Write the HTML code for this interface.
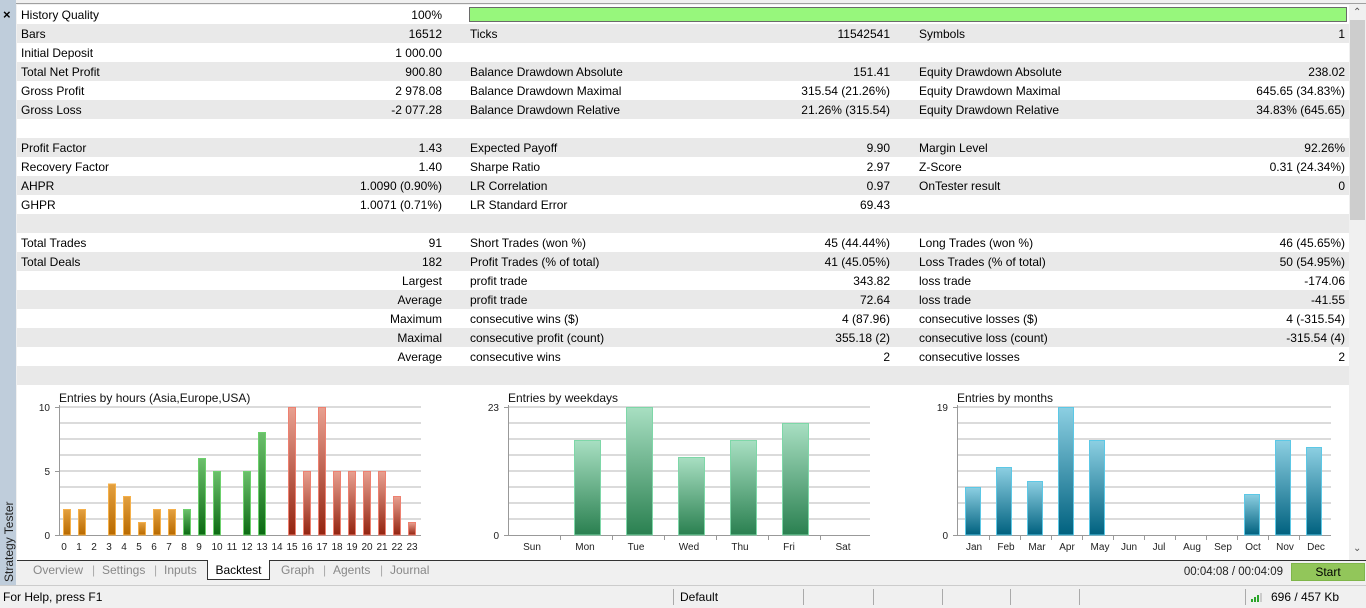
<!DOCTYPE html>
<html><head><meta charset="utf-8"><style>
*{margin:0;padding:0;box-sizing:border-box}
body{width:1366px;height:608px;overflow:hidden;background:#f0f0f0;font-family:"Liberation Sans",sans-serif;font-size:12px;color:#000;position:relative}
.side{position:absolute;left:0;top:0;width:16px;height:586px;background:#bfcddb}
.main{position:absolute;left:17px;top:5px;width:1332px;height:555px;background:#fff}
.row{position:absolute;left:0;width:1332px;height:19px;line-height:21px}
.g{background:#e9e9e9}
.row span{position:absolute;white-space:nowrap}
.sb{position:absolute;left:1349px;top:5px;width:17px;height:555px;background:#f0f0f0}
.thumb{position:absolute;left:1px;top:15px;width:15px;height:200px;background:#cdcdcd}
</style></head><body>
<div style="position:absolute;left:0;top:3px;width:1366px;height:1px;background:#a0a0a0"></div>
<div class="side"></div>
<div style="position:absolute;left:3px;top:7px;font-size:13px;font-weight:bold">×</div>
<div style="position:absolute;left:-36px;top:530px;transform:rotate(-90deg);width:90px;font-size:12px;color:#222">Strategy Tester</div>
<div class="main">
<div class="row" style="top:0"><span style="left:4px">History Quality</span><span style="right:907px">100%</span><div style="position:absolute;left:452px;top:2px;width:878px;height:15px;background:#97f77c;border:1px solid #6a6a6a"></div></div>
<div class="row g" style="top:19px"><span style="left:4px">Bars</span><span style="right:907px">16512</span><span style="left:453px">Ticks</span><span style="right:459px">11542541</span><span style="left:902px">Symbols</span><span style="right:4px">1</span></div>
<div class="row" style="top:38px"><span style="left:4px">Initial Deposit</span><span style="right:907px">1 000.00</span></div>
<div class="row g" style="top:57px"><span style="left:4px">Total Net Profit</span><span style="right:907px">900.80</span><span style="left:453px">Balance Drawdown Absolute</span><span style="right:459px">151.41</span><span style="left:902px">Equity Drawdown Absolute</span><span style="right:4px">238.02</span></div>
<div class="row" style="top:76px"><span style="left:4px">Gross Profit</span><span style="right:907px">2 978.08</span><span style="left:453px">Balance Drawdown Maximal</span><span style="right:459px">315.54 (21.26%)</span><span style="left:902px">Equity Drawdown Maximal</span><span style="right:4px">645.65 (34.83%)</span></div>
<div class="row g" style="top:95px"><span style="left:4px">Gross Loss</span><span style="right:907px">-2 077.28</span><span style="left:453px">Balance Drawdown Relative</span><span style="right:459px">21.26% (315.54)</span><span style="left:902px">Equity Drawdown Relative</span><span style="right:4px">34.83% (645.65)</span></div>
<div class="row g" style="top:133px"><span style="left:4px">Profit Factor</span><span style="right:907px">1.43</span><span style="left:453px">Expected Payoff</span><span style="right:459px">9.90</span><span style="left:902px">Margin Level</span><span style="right:4px">92.26%</span></div>
<div class="row" style="top:152px"><span style="left:4px">Recovery Factor</span><span style="right:907px">1.40</span><span style="left:453px">Sharpe Ratio</span><span style="right:459px">2.97</span><span style="left:902px">Z-Score</span><span style="right:4px">0.31 (24.34%)</span></div>
<div class="row g" style="top:171px"><span style="left:4px">AHPR</span><span style="right:907px">1.0090 (0.90%)</span><span style="left:453px">LR Correlation</span><span style="right:459px">0.97</span><span style="left:902px">OnTester result</span><span style="right:4px">0</span></div>
<div class="row" style="top:190px"><span style="left:4px">GHPR</span><span style="right:907px">1.0071 (0.71%)</span><span style="left:453px">LR Standard Error</span><span style="right:459px">69.43</span></div>
<div class="row g" style="top:209px"></div>
<div class="row" style="top:228px"><span style="left:4px">Total Trades</span><span style="right:907px">91</span><span style="left:453px">Short Trades (won %)</span><span style="right:459px">45 (44.44%)</span><span style="left:902px">Long Trades (won %)</span><span style="right:4px">46 (45.65%)</span></div>
<div class="row g" style="top:247px"><span style="left:4px">Total Deals</span><span style="right:907px">182</span><span style="left:453px">Profit Trades (% of total)</span><span style="right:459px">41 (45.05%)</span><span style="left:902px">Loss Trades (% of total)</span><span style="right:4px">50 (54.95%)</span></div>
<div class="row" style="top:266px"><span style="right:907px">Largest</span><span style="left:453px">profit trade</span><span style="right:459px">343.82</span><span style="left:902px">loss trade</span><span style="right:4px">-174.06</span></div>
<div class="row g" style="top:285px"><span style="right:907px">Average</span><span style="left:453px">profit trade</span><span style="right:459px">72.64</span><span style="left:902px">loss trade</span><span style="right:4px">-41.55</span></div>
<div class="row" style="top:304px"><span style="right:907px">Maximum</span><span style="left:453px">consecutive wins ($)</span><span style="right:459px">4 (87.96)</span><span style="left:902px">consecutive losses ($)</span><span style="right:4px">4 (-315.54)</span></div>
<div class="row g" style="top:323px"><span style="right:907px">Maximal</span><span style="left:453px">consecutive profit (count)</span><span style="right:459px">355.18 (2)</span><span style="left:902px">consecutive loss (count)</span><span style="right:4px">-315.54 (4)</span></div>
<div class="row" style="top:342px"><span style="right:907px">Average</span><span style="left:453px">consecutive wins</span><span style="right:459px">2</span><span style="left:902px">consecutive losses</span><span style="right:4px">2</span></div>
<div class="row g" style="top:361px"></div>
</div>
<div class="sb"><div style="position:absolute;left:4px;top:2px;font-size:10px;color:#555">&#8963;</div><div class="thumb"></div><div style="position:absolute;left:4px;top:538px;font-size:10px;color:#555">&#8964;</div></div>

<svg style="position:absolute;left:0;top:0" width="1366" height="560" font-family="Liberation Sans,sans-serif">
<defs>
<linearGradient id="o" x1="0" y1="0" x2="0" y2="1"><stop offset="0" stop-color="#e3a040"/><stop offset="1" stop-color="#b86a00"/></linearGradient>
<linearGradient id="gr" x1="0" y1="0" x2="0" y2="1"><stop offset="0" stop-color="#6cbf6c"/><stop offset="1" stop-color="#0b6a12"/></linearGradient>
<linearGradient id="rd" x1="0" y1="0" x2="0" y2="1"><stop offset="0" stop-color="#e8a090"/><stop offset="1" stop-color="#932410"/></linearGradient>
<linearGradient id="tl" x1="0" y1="0" x2="0" y2="1"><stop offset="0" stop-color="#a8dfc2"/><stop offset="1" stop-color="#2a8050"/></linearGradient>
<linearGradient id="bl" x1="0" y1="0" x2="0" y2="1"><stop offset="0" stop-color="#8ccfe2"/><stop offset="1" stop-color="#00617f"/></linearGradient>
</defs>
<g stroke="#cfcfcf" stroke-width="1.5">
<path d="M60 407H421M60 423H421M60 439H421M60 455H421M60 471H421M60 487H421M60 503H421M60 519H421"/>
<path d="M509 407H870M509 423H870M509 439H870M509 455H870M509 471H870M509 487H870M509 503H870M509 519H870"/>
<path d="M958 407H1331M958 423H1331M958 439H1331M958 455H1331M958 471H1331M958 487H1331M958 503H1331M958 519H1331"/>
</g>
<g stroke="#999" stroke-width="1">
<path d="M59.5 405V536M55 407.5H60M55 471.5H60M55 535.5H421"/>
<path d="M508.5 405V536M504 407.5H509M504 535.5H870M560.5 535V540M612.5 535V540M664.5 535V540M716.5 535V540M768.5 535V540M820.5 535V540"/>
<path d="M957.5 405V536M953 407.5H958M953 535.5H1331M989.5 535V540M1020.5 535V540M1051.5 535V540M1082.5 535V540M1113.5 535V540M1144.5 535V540M1175.5 535V540M1206.5 535V540M1237.5 535V540M1268.5 535V540M1299.5 535V540"/>
</g>
<g font-size="12" fill="#111"><text x="59" y="402">Entries by hours (Asia,Europe,USA)</text><text x="508" y="402">Entries by weekdays</text><text x="957" y="402">Entries by months</text></g>
<g font-size="10" fill="#222" text-anchor="end"><text x="50" y="411">10</text><text x="50" y="475">5</text><text x="50" y="539">0</text><text x="499" y="411">23</text><text x="499" y="539">0</text><text x="948" y="411">19</text><text x="948" y="539">0</text></g>
<g fill="url(#o)" stroke="#f5b04a"><rect x="63.5" y="509.5" width="7" height="25.5"/><rect x="78.5" y="509.5" width="7" height="25.5"/><rect x="108.5" y="484" width="7" height="51"/><rect x="123.5" y="496.5" width="7" height="38.5"/><rect x="138.5" y="522.5" width="7" height="12.5"/><rect x="153.5" y="509.5" width="7" height="25.5"/><rect x="168.5" y="509.5" width="7" height="25.5"/></g>
<g fill="url(#gr)" stroke="#6cd06c"><rect x="183.5" y="509.5" width="7" height="25.5"/><rect x="198.5" y="458.5" width="7" height="76.5"/><rect x="213.5" y="471.5" width="7" height="63.5"/><rect x="243.5" y="471.5" width="7" height="63.5"/><rect x="258.5" y="432.5" width="7" height="102.5"/></g>
<g fill="url(#rd)" stroke="#ee8070"><rect x="288.5" y="407.5" width="7" height="127.5"/><rect x="303.5" y="471.5" width="7" height="63.5"/><rect x="318.5" y="407.5" width="7" height="127.5"/><rect x="333.5" y="471.5" width="7" height="63.5"/><rect x="348.5" y="471.5" width="7" height="63.5"/><rect x="363.5" y="471.5" width="7" height="63.5"/><rect x="378.5" y="471.5" width="7" height="63.5"/><rect x="393.5" y="496.5" width="7" height="38.5"/><rect x="408.5" y="522.5" width="7" height="12.5"/></g>
<g fill="url(#tl)" stroke="#7ed7a8"><rect x="574.5" y="440.5" width="26" height="94.5"/><rect x="626.5" y="407.5" width="26" height="127.5"/><rect x="678.5" y="457.5" width="26" height="77.5"/><rect x="730.5" y="440.5" width="26" height="94.5"/><rect x="782.5" y="423.5" width="26" height="111.5"/></g>
<g fill="url(#bl)" stroke="#5cc8e6"><rect x="965.5" y="487.5" width="15" height="47.5"/><rect x="996.5" y="467.5" width="15" height="67.5"/><rect x="1027.5" y="481.5" width="15" height="53.5"/><rect x="1058.5" y="407.5" width="15" height="127.5"/><rect x="1089.5" y="440.5" width="15" height="94.5"/><rect x="1244.5" y="494.5" width="15" height="40.5"/><rect x="1275.5" y="440.5" width="15" height="94.5"/><rect x="1306.5" y="447.5" width="15" height="87.5"/></g>
<g font-size="10" fill="#222" text-anchor="middle">
<text x="64" y="550">0</text><text x="79" y="550">1</text><text x="94" y="550">2</text><text x="109" y="550">3</text><text x="124" y="550">4</text><text x="139" y="550">5</text><text x="154" y="550">6</text><text x="169" y="550">7</text><text x="184" y="550">8</text><text x="199" y="550">9</text><text x="217" y="550">10</text><text x="232" y="550">11</text><text x="247" y="550">12</text><text x="262" y="550">13</text><text x="277" y="550">14</text><text x="292" y="550">15</text><text x="307" y="550">16</text><text x="322" y="550">17</text><text x="337" y="550">18</text><text x="352" y="550">19</text><text x="367" y="550">20</text><text x="382" y="550">21</text><text x="397" y="550">22</text><text x="412" y="550">23</text>
<text x="532" y="550">Sun</text><text x="585" y="550">Mon</text><text x="636" y="550">Tue</text><text x="689" y="550">Wed</text><text x="740" y="550">Thu</text><text x="789" y="550">Fri</text><text x="843" y="550">Sat</text>
<text x="974" y="550">Jan</text><text x="1006" y="550">Feb</text><text x="1037" y="550">Mar</text><text x="1067" y="550">Apr</text><text x="1100" y="550">May</text><text x="1129" y="550">Jun</text><text x="1159" y="550">Jul</text><text x="1192" y="550">Aug</text><text x="1223" y="550">Sep</text><text x="1253" y="550">Oct</text><text x="1285" y="550">Nov</text><text x="1316" y="550">Dec</text>
</g>
</svg>

<div style="position:absolute;left:17px;top:560px;width:1349px;height:1px;background:#333"></div>
<div style="position:absolute;left:17px;top:560px;width:600px;height:22px;font-size:12px;color:#888;line-height:20px">
<span style="position:absolute;left:16px">Overview</span><span style="position:absolute;left:75px;color:#aaa">|</span>
<span style="position:absolute;left:85px">Settings</span><span style="position:absolute;left:137px;color:#aaa">|</span>
<span style="position:absolute;left:147px">Inputs</span>
<div style="position:absolute;left:190px;top:0;width:63px;height:20px;background:#fff;border:1px solid #333;border-top:none;color:#000;text-align:center">Backtest</div>
<span style="position:absolute;left:264px">Graph</span><span style="position:absolute;left:306px;color:#aaa">|</span>
<span style="position:absolute;left:316px">Agents</span><span style="position:absolute;left:363px;color:#aaa">|</span>
<span style="position:absolute;left:373px">Journal</span>
</div>
<div style="position:absolute;left:1150px;width:133px;text-align:right;top:566px;font-size:11.5px;color:#222">00:04:08 / 00:04:09</div>
<div style="position:absolute;left:1291px;top:563px;width:74px;height:18px;background:#92c65a;border:1px solid #7fb64a;text-align:center;line-height:16px;font-size:12px">Start</div>
<div style="position:absolute;left:0;top:585px;width:1366px;height:1px;background:#ccc"></div>
<div style="position:absolute;left:0;top:586px;width:1366px;height:22px;background:#f0f0f0;font-size:12px;line-height:22px">
<span style="position:absolute;left:3px">For Help, press F1</span>
<span style="position:absolute;left:673px;top:3px;width:1px;height:16px;background:#aaa"></span>
<span style="position:absolute;left:680px">Default</span>
<span style="position:absolute;left:803px;top:3px;width:1px;height:16px;background:#aaa"></span>
<span style="position:absolute;left:873px;top:3px;width:1px;height:16px;background:#aaa"></span>
<span style="position:absolute;left:942px;top:3px;width:1px;height:16px;background:#aaa"></span>
<span style="position:absolute;left:1010px;top:3px;width:1px;height:16px;background:#aaa"></span>
<span style="position:absolute;left:1079px;top:3px;width:1px;height:16px;background:#aaa"></span>
<span style="position:absolute;left:1245px;top:3px;width:1px;height:16px;background:#aaa"></span>
<svg style="position:absolute;left:1251px;top:6px" width="14" height="10"><rect x="0" y="7" width="2" height="3" fill="#2aa52a"/><rect x="3" y="5" width="2" height="5" fill="#2aa52a"/><rect x="6" y="3" width="2" height="7" fill="#2aa52a"/><rect x="9" y="1" width="2" height="9" fill="#ccc"/></svg>
<span style="position:absolute;left:1271px">696 / 457 Kb</span>
</div>
</body></html>
